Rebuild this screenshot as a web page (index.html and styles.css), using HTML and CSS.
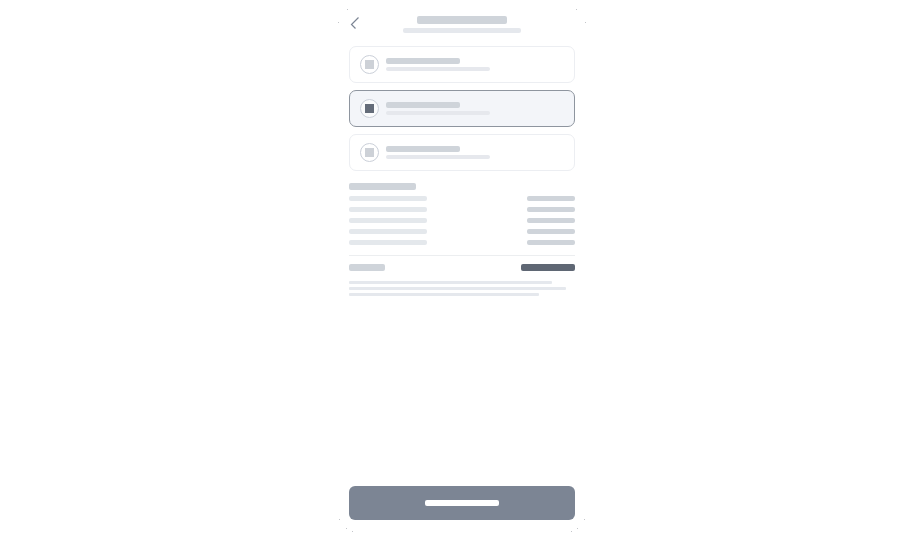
FILE: index.html
```html
<!DOCTYPE html>
<html lang="en">
<head>
  <meta charset="UTF-8" />
  <meta name="viewport" content="width=device-width, initial-scale=1" />
  <title>Checkout</title>
  <link rel="stylesheet" href="styles.css">
</head>
<body>
  <main class="phone">
    <svg class="corner top-left" viewBox="0 0 15 15"><path d="M9 0h1v1h-1zM0 13h1v1h-1z"/></svg>
    <svg class="corner top-right" viewBox="0 0 15 15"><path d="M5 0h1v1h-1zM14 13h1v1h-1z"/></svg>
    <svg class="corner bottom-left" viewBox="0 0 15 15"><path d="M1 2h1v1h-1zM8 11h1v1h-1zM14 14h1v1h-1z"/></svg>
    <svg class="corner bottom-right" viewBox="0 0 15 15"><path d="M13 2h1v1h-1zM6 11h1v1h-1zM0 14h1v1h-1z"/></svg>

    <header class="header">
      <button class="back" type="button" aria-label="Back">
        <svg viewBox="0 0 10 14"><path d="M9.5 1.5L2.5 8.5L6.5 12.5"/></svg>
      </button>
      <div class="heading">
        <span class="bar title"></span>
        <span class="bar subtitle"></span>
      </div>
    </header>

    <form class="form">
      <div class="options">
        <label class="option">
          <input type="radio" name="option" value="1" aria-label="Option 1" />
          <span class="option-text">
            <span class="bar name"></span>
            <span class="bar info"></span>
          </span>
        </label>
        <label class="option">
          <input type="radio" name="option" value="2" aria-label="Option 2" checked />
          <span class="option-text">
            <span class="bar name"></span>
            <span class="bar info"></span>
          </span>
        </label>
        <label class="option">
          <input type="radio" name="option" value="3" aria-label="Option 3" />
          <span class="option-text">
            <span class="bar name"></span>
            <span class="bar info"></span>
          </span>
        </label>
      </div>

      <section class="summary">
        <span class="bar section-title"></span>
        <div class="row"><span class="bar key"></span><span class="bar value"></span></div>
        <div class="row"><span class="bar key"></span><span class="bar value"></span></div>
        <div class="row"><span class="bar key"></span><span class="bar value"></span></div>
        <div class="row"><span class="bar key"></span><span class="bar value"></span></div>
        <div class="row"><span class="bar key"></span><span class="bar value"></span></div>
      </section>

      <div class="row total">
        <span class="bar total-key"></span>
        <span class="bar total-value"></span>
      </div>

      <div class="notes">
        <span class="bar note"></span>
        <span class="bar note long"></span>
        <span class="bar note short"></span>
      </div>

      <button class="submit" type="button" aria-label="Continue">
        <span class="bar submit-text"></span>
      </button>
    </form>
  </main>
</body>
</html>
```

FILE: styles.css
```css
* {
  box-sizing: border-box;
}
body {
  margin: 0;
  padding: 9px 8px 8px;
  min-height: 100vh;
  display: flex;
  justify-content: center;
  background: #fff;
  font-family: "Liberation Sans", Arial, sans-serif;
}
.phone {
  position: relative;
  width: 100%;
  max-width: 248px;
  padding: 7px 11px 12px;
  display: flex;
  flex-direction: column;
}

/* dotted traces of the rounded frame */
.corner {
  position: absolute;
  width: 15px;
  height: 15px;
  fill: #c4c6ca;
  shape-rendering: crispEdges;
}
.top-left {
  top: 0;
  left: 0;
}
.top-right {
  top: 0;
  right: 0;
}
.bottom-left {
  bottom: 0;
  left: 0;
}
.bottom-right {
  bottom: 0;
  right: 0;
}

.bar {
  display: block;
  height: 5px;
  border-radius: 2px;
  background: #cfd4da;
}

.header {
  display: grid;
  grid-template-columns: 10px 1fr 10px;
  margin-bottom: 13px;
}
.back {
  padding: 0;
  border: 0;
  background: none;
  height: 14px;
  cursor: pointer;
}
.back svg {
  display: block;
  width: 10px;
  height: 14px;
  fill: none;
  stroke: #7c8594;
  stroke-width: 1.2;
}
.heading {
  display: flex;
  flex-direction: column;
  align-items: center;
  gap: 4px;
}
.title {
  width: 90px;
  height: 8px;
}
.subtitle {
  width: 118px;
  background: #e5e8ed;
}

.form {
  flex: 1;
  display: flex;
  flex-direction: column;
}
.options {
  display: flex;
  flex-direction: column;
  gap: 7px;
}
.option {
  display: flex;
  align-items: center;
  gap: 7px;
  height: 37px;
  padding: 0 10px;
  border: 1px solid #eceef2;
  border-radius: 7px;
  cursor: pointer;
}
.option input {
  appearance: none;
  width: 19px;
  height: 19px;
  margin: 0;
  border: 1px solid #cbd0d9;
  border-radius: 50%;
  background: linear-gradient(#cdd1d7, #cdd1d7) center / 9px 9px no-repeat #fff;
}
.option:has(input:checked) {
  border-color: #8e959f;
  background: #f3f5f9;
}
.option input:checked {
  background: linear-gradient(#646c79, #646c79) center / 9px 9px no-repeat #fafbfc;
}
.option-text {
  display: flex;
  flex-direction: column;
  gap: 3px;
}
.name {
  width: 74px;
  height: 6px;
}
.info {
  width: 104px;
  height: 4px;
  background: #e6e8ed;
}

.summary {
  display: flex;
  flex-direction: column;
  gap: 6px;
  margin-top: 12px;
  padding-bottom: 10px;
  border-bottom: 1px solid #eceef0;
}
.section-title {
  width: 67px;
  height: 7px;
}
.row {
  display: flex;
  justify-content: space-between;
}
.key {
  width: 78px;
  background: #e4e8ec;
}
.value {
  width: 48px;
}
.total {
  margin-top: 8px;
}
.total-key {
  width: 36px;
  height: 7px;
}
.total-value {
  width: 54px;
  height: 7px;
  background: #5f6774;
}

.notes {
  display: flex;
  flex-direction: column;
  gap: 3px;
  margin-top: 10px;
}
.note {
  width: 90%;
  height: 3px;
  border-radius: 1px;
  background: #e5e8ed;
}
.note.long {
  width: 96%;
}
.note.short {
  width: 84%;
}

.submit {
  display: flex;
  align-items: center;
  justify-content: center;
  width: 100%;
  height: 34px;
  margin-top: auto;
  padding: 0;
  border: 0;
  border-radius: 6px;
  background: #7c8594;
  cursor: pointer;
}
.submit-text {
  width: 74px;
  height: 6px;
  background: #fff;
}
```
